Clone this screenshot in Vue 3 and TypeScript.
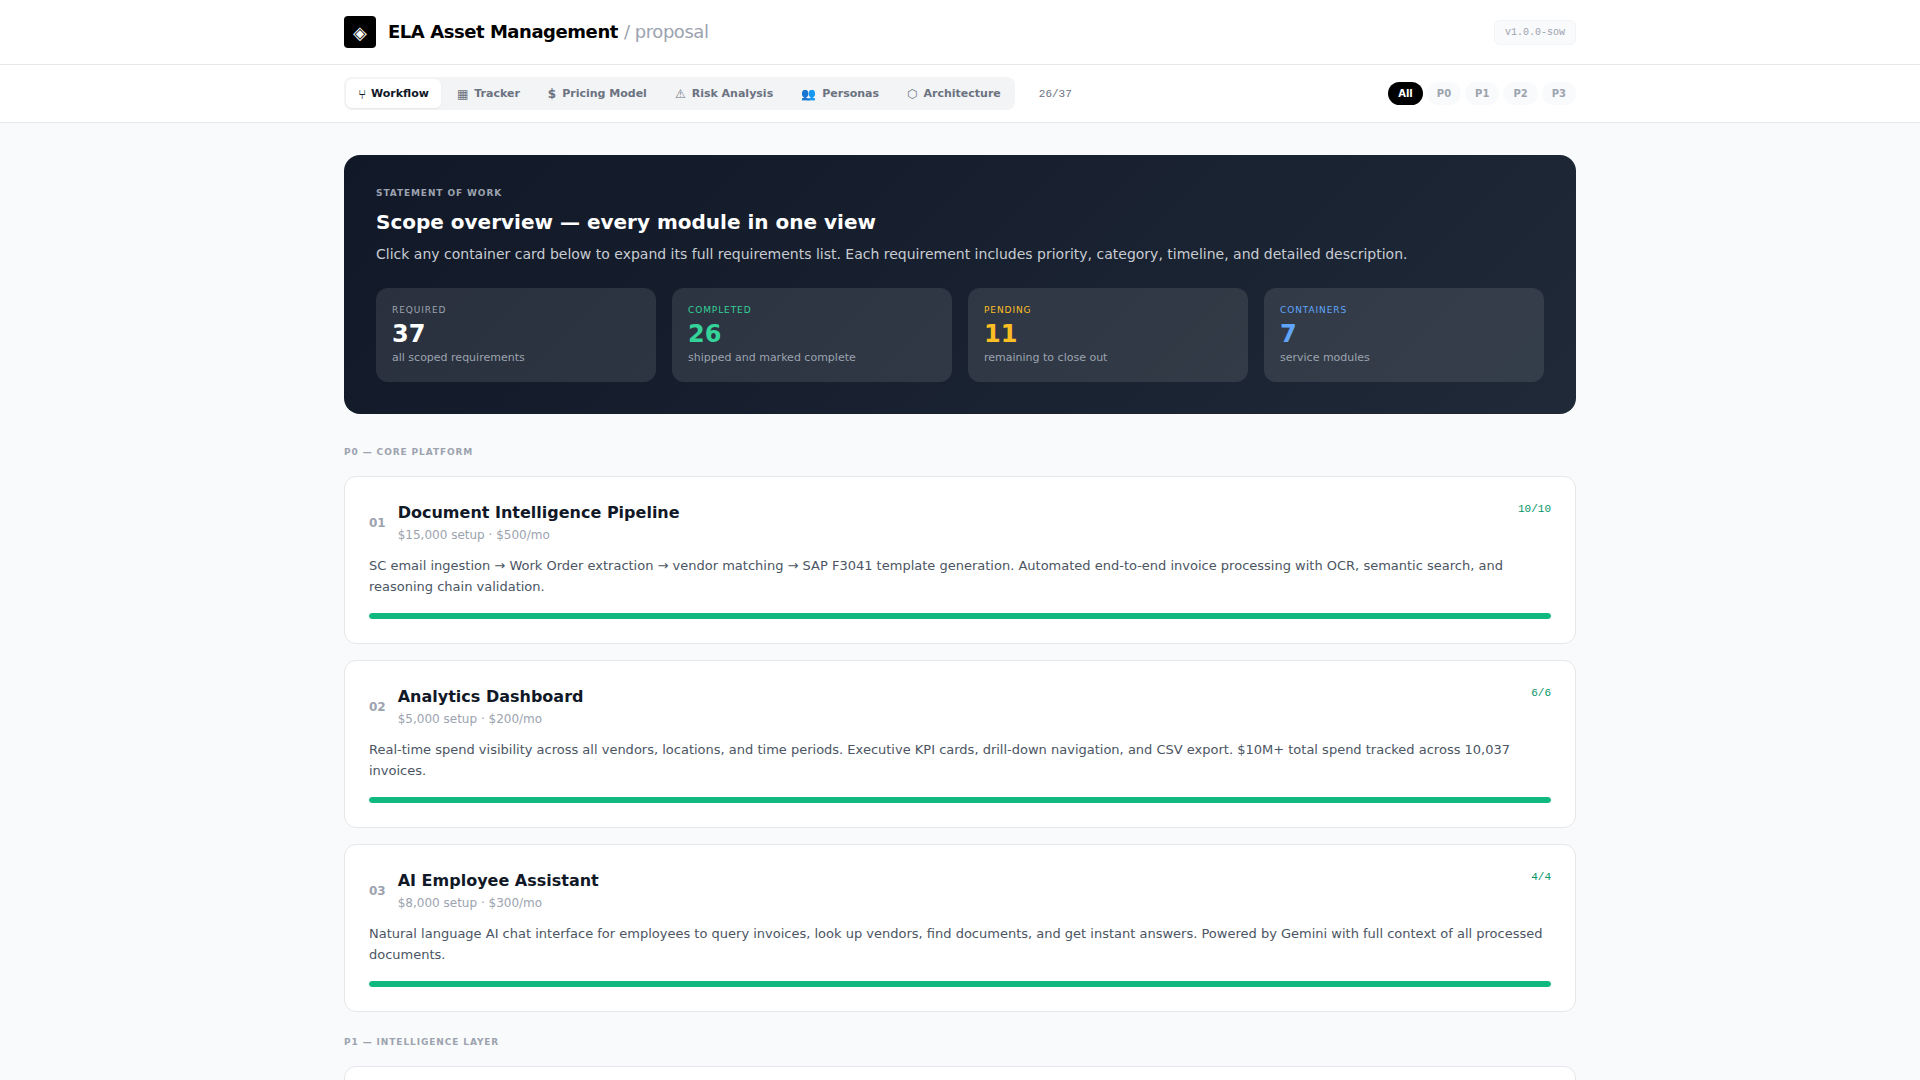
<script setup lang="ts">
interface Tab { icon: string; label: string; active?: boolean }
interface Stat { label: string; value: string; sub: string; tone: string }
interface Module { no: string; title: string; price: string; count: string; desc: string }

const tabs: Tab[] = [
  { icon: '⑂', label: 'Workflow', active: true },
  { icon: '▦', label: 'Tracker' },
  { icon: '$', label: 'Pricing Model' },
  { icon: '⚠', label: 'Risk Analysis' },
  { icon: '👥', label: 'Personas' },
  { icon: '⬡', label: 'Architecture' },
]
const filters = ['All', 'P0', 'P1', 'P2', 'P3']
const stats: Stat[] = [
  { label: 'REQUIRED', value: '37', sub: 'all scoped requirements', tone: 'plain' },
  { label: 'COMPLETED', value: '26', sub: 'shipped and marked complete', tone: 'green' },
  { label: 'PENDING', value: '11', sub: 'remaining to close out', tone: 'amber' },
  { label: 'CONTAINERS', value: '7', sub: 'service modules', tone: 'blue' },
]
const modules: Module[] = [
  {
    no: '01', title: 'Document Intelligence Pipeline', price: '$15,000 setup · $500/mo', count: '10/10',
    desc: 'SC email ingestion → Work Order extraction → vendor matching → SAP F3041 template generation. Automated end-to-end invoice processing with OCR, semantic search, and reasoning chain validation.',
  },
  {
    no: '02', title: 'Analytics Dashboard', price: '$5,000 setup · $200/mo', count: '6/6',
    desc: 'Real-time spend visibility across all vendors, locations, and time periods. Executive KPI cards, drill-down navigation, and CSV export. $10M+ total spend tracked across 10,037 invoices.',
  },
  {
    no: '03', title: 'AI Employee Assistant', price: '$8,000 setup · $300/mo', count: '4/4',
    desc: 'Natural language AI chat interface for employees to query invoices, look up vendors, find documents, and get instant answers. Powered by Gemini with full context of all processed documents.',
  },
]
</script>

<template>
  <div class="page">
    <header class="top">
      <div class="wrap top-in">
        <div class="brand">
          <span class="logo">◈</span>
          <div class="brand-text">
            <span class="name">ELA Asset Management</span>
            <span class="crumb">/ proposal</span>
          </div>
        </div>
        <span class="version">v1.0.0-sow</span>
      </div>
    </header>

    <nav class="bar">
      <div class="wrap bar-in">
        <div class="tabs">
          <button v-for="t in tabs" :key="t.label" class="tab" :class="{ on: t.active }">
            <span class="tab-icon" :class="{ fork: t.active }">{{ t.icon }}</span>{{ t.label }}
          </button>
        </div>
        <span class="tally">26/37</span>
        <div class="filters">
          <button v-for="(f, i) in filters" :key="f" class="pill" :class="{ on: i === 0 }">{{ f }}</button>
        </div>
      </div>
    </nav>

    <main class="wrap main">
      <section class="hero">
        <div class="eyebrow">STATEMENT OF WORK</div>
        <h1 class="hero-title">Scope overview — every module in one view</h1>
        <p class="hero-text">Click any container card below to expand its full requirements list. Each requirement includes priority, category, timeline, and detailed description.</p>
        <div class="stats">
          <div v-for="s in stats" :key="s.label" class="stat" :class="s.tone">
            <div class="stat-label">{{ s.label }}</div>
            <div class="stat-value">{{ s.value }}</div>
            <div class="stat-sub">{{ s.sub }}</div>
          </div>
        </div>
      </section>

      <h2 class="section">P0 — CORE PLATFORM</h2>
      <article v-for="m in modules" :key="m.no" class="card">
        <div class="card-head">
          <span class="no">{{ m.no }}</span>
          <div class="heading">
            <h3 class="card-title">{{ m.title }}</h3>
            <div class="price">{{ m.price }}</div>
          </div>
          <span class="count">{{ m.count }}</span>
        </div>
        <p class="desc">{{ m.desc }}</p>
        <div class="track"><div class="fill"></div></div>
      </article>

      <h2 class="section second">P1 — INTELLIGENCE LAYER</h2>
      <article class="card stub"></article>
    </main>
  </div>
</template>

<style>
html, body { margin: 0; background: #f9fafb; }
</style>

<style scoped>
* { box-sizing: border-box; }
.page {
  height: 100vh;
  overflow: hidden;
  background: #f9fafb;
  font-family: "DejaVu Sans", sans-serif;
  color: #111827;
  -webkit-font-smoothing: antialiased;
}
.wrap { width: 1232px; margin: 0 auto; }
.top { height: 65px; background: #fff; border-bottom: 1px solid #e5e7eb; }
.top-in { height: 64px; display: flex; align-items: center; justify-content: space-between; }
.brand { display: flex; align-items: center; }
.logo {
  width: 32px; height: 32px; border-radius: 4px; background: #000; color: #fff;
  display: flex; align-items: center; justify-content: center; font-size: 18px; margin-right: 12px;
}
.brand-text { letter-spacing: -0.025em; font-size: 18px; line-height: 28px; }
.name { font-weight: 700; color: #000; }
.crumb { color: #9ca3af; margin-left: 6px; }
.version {
  font-family: "Liberation Mono", monospace; font-size: 10px; color: #9ca3af;
  background: #f9fafb; border: 1px solid #f3f4f6; border-radius: 6px; padding: 6px 10px;
}
.bar { height: 58px; background: #fff; border-bottom: 1px solid #e5e7eb; }
.bar-in { height: 57px; display: flex; align-items: center; }
.tabs { display: flex; gap: 4px; padding: 2px; background: #f3f4f6; border-radius: 8px; }
.tab {
  border: 0; background: transparent; font: 700 11px "DejaVu Sans", sans-serif; color: #6b7280;
  padding: 0 12px; height: 29px; border-radius: 6px; display: flex; align-items: center; white-space: nowrap;
}
.tab.on { background: #fff; color: #111827; box-shadow: 0 1px 2px rgba(0,0,0,.05); }
.tab-icon { margin-right: 6px; font-size: 12px; }
.tab-icon.fork { font-size: 14px; font-weight: 400; margin-right: 5px; }
.tally { font-family: "Liberation Mono", monospace; font-size: 11px; color: #6b7280; margin-left: 24px; }
.filters { margin-left: auto; display: flex; gap: 4px; }
.pill {
  border: 0; height: 23px; padding: 0 10px; border-radius: 12px; background: #f9fafb; color: #9ca3af;
  font: 700 10px "DejaVu Sans", sans-serif;
}
.pill.on { background: #000; color: #fff; }
.main { padding-top: 32px; }
.hero {
  height: 259px; border-radius: 16px; padding: 32px; color: #fff;
  background: linear-gradient(135deg, #111827, #1f2937);
}
.eyebrow { font-size: 9px; font-weight: 700; letter-spacing: .1em; color: #9ca3af; line-height: 13px; }
.hero-title { margin: 8px 0 0; font-size: 20px; font-weight: 700; line-height: 28px; }
.hero-text { margin: 8px 0 0; font-size: 14px; line-height: 20px; color: #c8ccd3; }
.stats { margin-top: 24px; display: grid; grid-template-columns: repeat(4, 1fr); gap: 16px; }
.stat { height: 94px; padding: 16px; border-radius: 12px; background: rgba(255,255,255,.1); }
.stat-label { font-size: 9px; letter-spacing: .1em; line-height: 13px; color: #9ca3af; }
.stat-value { font-size: 24px; font-weight: 700; line-height: 32px; margin-top: 1px; }
.stat-sub { font-size: 11px; line-height: 16px; color: #9ca3af; }
.green .stat-label { color: #34d399; } .green .stat-value { color: #34d399; }
.amber .stat-label { color: #fbbf24; } .amber .stat-value { color: #fbbf24; }
.blue .stat-label { color: #60a5fa; } .blue .stat-value { color: #60a5fa; }
.section {
  margin: 32px 0 17px; font-size: 9px; font-weight: 700; letter-spacing: .1em; line-height: 13px; color: #9ca3af;
}
.section.second { margin-top: 24px; }
.card {
  height: 168px; background: #fff; border: 1px solid #e5e7eb; border-radius: 12px; padding: 24px; margin-bottom: 16px;
}
.card.stub { margin: 0; }
.card-head { display: flex; align-items: center; }
.no { font-size: 12px; font-weight: 700; color: #9ca3af; margin-right: 12px; }
.heading { flex: 1; }
.card-title { margin: 0; font-size: 16px; font-weight: 700; line-height: 24px; color: #111827; }
.price { font-size: 12px; line-height: 20px; color: #9ca3af; }
.count { align-self: flex-start; margin-top: 2px; font-family: "Liberation Mono", monospace; font-size: 11px; color: #059669; }
.desc { margin: 10px 0 0; font-size: 13px; line-height: 21px; color: #4b5563; }
.track { margin-top: 16px; height: 6px; border-radius: 3px; background: #f3f4f6; overflow: hidden; }
.fill { height: 100%; width: 100%; border-radius: 3px; background: #10b981; }
</style>
